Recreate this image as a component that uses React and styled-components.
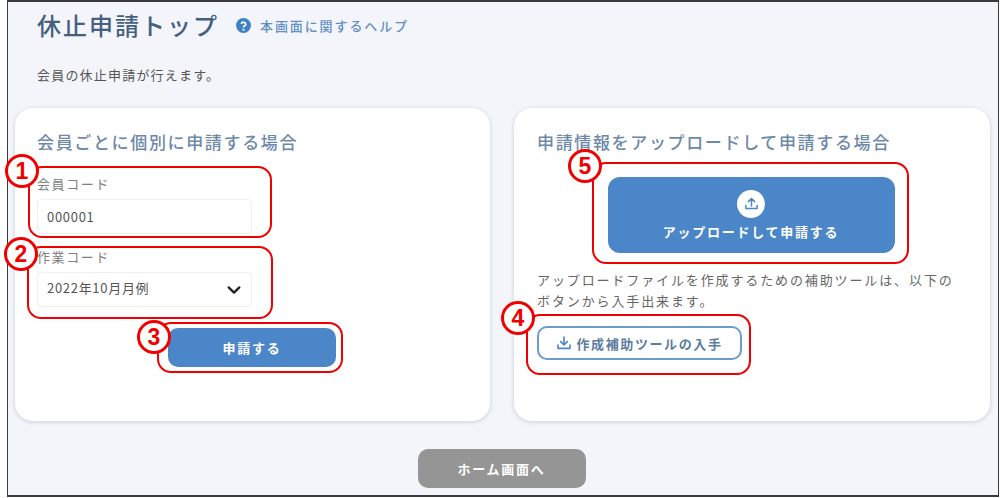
import styled, { createGlobalStyle } from "styled-components";

const GlobalStyle = createGlobalStyle`
  * {
    box-sizing: border-box;
  }
  body {
    margin: 0;
    background: #fff;
    font-family: "Noto Sans CJK JP", "Noto Sans", sans-serif;
  }
`;

const Page = styled.div`
  width: 1000px;
  height: 498px;
  padding: 0 1px 1px 7px;
  background: #fff;
`;

const Frame = styled.div`
  position: relative;
  width: 100%;
  height: 100%;
  padding: 0 7px;
  background: #f4f5fa;
  border: solid #3a3a3a;
  border-width: 2px 1px 2px 1px;
  display: flex;
  flex-direction: column;
`;

const Header = styled.div`
  display: flex;
  align-items: center;
  height: 46px;
  padding: 0 0 0 22px;
`;

const Title = styled.h1`
  margin: 0;
  font-size: 24px;
  line-height: 34px;
  font-weight: 500;
  letter-spacing: 2px;
  color: #44607f;
`;

const HelpLink = styled.a`
  display: flex;
  align-items: center;
  gap: 9px;
  margin-left: 17px;
  font-size: 13px;
  font-weight: 500;
  letter-spacing: 1.9px;
  color: #5f8fc4;
`;

const Description = styled.p`
  margin: 17px 0 0 22px;
  font-size: 13px;
  line-height: 20px;
  letter-spacing: 1.2px;
  color: #555;
`;

const Columns = styled.div`
  display: grid;
  grid-template-columns: 475px 476px;
  gap: 24px;
  margin-top: 23px;
`;

const Card = styled.section`
  height: 313px;
  padding: 21px ${(p) => p.$side}px;
  background: #fff;
  border-radius: 18px;
  box-shadow: 0 1px 4px rgba(90, 100, 130, 0.28);
`;

const CardTitle = styled.h2`
  margin: 0;
  font-size: 17px;
  line-height: 26px;
  font-weight: 500;
  letter-spacing: 1.65px;
  color: #6d88a8;
`;

const Field = styled.div`
  margin-top: ${(p) => p.$top}px;
  width: 215px;
`;

const Label = styled.div`
  font-size: 13px;
  line-height: 18px;
  letter-spacing: 1.6px;
  color: #808080;
`;

const Control = styled.div`
  display: flex;
  align-items: center;
  justify-content: space-between;
  height: 35px;
  margin-top: 6px;
  padding: 0 9px;
  background: #fff;
  border: 1px solid #f0f0f3;
  border-radius: 4px;
  font-size: 13px;
  letter-spacing: 0.7px;
  color: #555;
`;

const SelectValue = styled.span`
  margin-bottom: 4px;
`;

const SubmitRow = styled.div`
  display: flex;
  margin: 21px 0 0 131px;
`;

const SolidButton = styled.button`
  display: flex;
  flex-direction: column;
  align-items: center;
  justify-content: center;
  width: ${(p) => p.$w}px;
  height: ${(p) => p.$h}px;
  padding: 0;
  background: ${(p) => p.$bg || "#4a86c8"};
  border: none;
  border-radius: ${(p) => p.$radius || 10}px;
  color: #fff;
  font-family: inherit;
  font-size: 13px;
  font-weight: 700;
  letter-spacing: 1.75px;
`;

const UploadRow = styled.div`
  display: flex;
  justify-content: center;
  margin-top: 22px;
  padding-right: 2px;
`;

const UploadIcon = styled.span`
  display: flex;
  align-items: center;
  justify-content: center;
  width: 28px;
  height: 28px;
  margin-bottom: 4px;
  background: #fff;
  border-radius: 50%;
`;

const Note = styled.p`
  margin: 16px 0 0;
  font-size: 13px;
  line-height: 21px;
  letter-spacing: 1.88px;
  color: #666;
`;

const OutlineButton = styled.button`
  display: flex;
  align-items: center;
  justify-content: center;
  gap: 4px;
  width: 205px;
  height: 34px;
  margin-top: 15px;
  padding: 0;
  background: #fff;
  border: 2px solid #6f9ac9;
  border-radius: 10px;
  color: #5d7d9f;
  font-family: inherit;
  font-size: 13px;
  font-weight: 700;
  letter-spacing: 1.6px;
`;

const Footer = styled.div`
  display: flex;
  justify-content: center;
  margin-top: 28px;
  padding-right: 3px;
`;

const Marker = styled.div`
  position: absolute;
  left: ${(p) => p.$x - 8}px;
  top: ${(p) => p.$y - 2}px;
  width: ${(p) => p.$w}px;
  height: ${(p) => p.$h}px;
  border: 2px solid #f00000;
  border-radius: 14px;
  pointer-events: none;
`;

const Badge = styled.div`
  position: absolute;
  left: ${(p) => p.$x - 8 - 17}px;
  top: ${(p) => p.$y - 2 - 17}px;
  width: 34px;
  height: 34px;
  display: flex;
  align-items: center;
  justify-content: center;
  background: #fff;
  border: 3px solid #f00000;
  border-radius: 50%;
  color: #f00000;
  font-family: "Liberation Sans", sans-serif;
  font-size: 23px;
  font-weight: 700;
`;

const markers = [
  { x: 28, y: 166, w: 244, h: 72 },
  { x: 27, y: 246, w: 246, h: 73 },
  { x: 157, y: 322, w: 186, h: 51 },
  { x: 526, y: 314, w: 225, h: 61 },
  { x: 592, y: 162, w: 317, h: 102 },
];

const badges = [
  { n: 1, x: 22, y: 171 },
  { n: 2, x: 21, y: 254 },
  { n: 3, x: 154, y: 337 },
  { n: 4, x: 518, y: 318 },
  { n: 5, x: 585, y: 166 },
];

function HelpIcon() {
  return (
    <svg width="15" height="15" viewBox="0 0 24 24">
      <circle cx="12" cy="12" r="12" fill="#3f82c4" />
      <path
        d="M8.4 9.4a3.7 3.7 0 0 1 7.2 .6c0 2.5-3.6 2.7-3.6 5"
        fill="none"
        stroke="#fff"
        strokeWidth="2.8"
      />
      <circle cx="12" cy="18.8" r="1.7" fill="#fff" />
    </svg>
  );
}

function TrayArrow({ up, color, size }) {
  return (
    <svg
      width={size}
      height={size}
      viewBox="0 0 24 24"
      fill="none"
      stroke={color}
      strokeWidth="2.4"
      strokeLinecap="round"
      strokeLinejoin="round"
    >
      <path d="M3 15v5h18v-5" />
      {up ? (
        <path d="M12 16V4M7 9l5-5 5 5" />
      ) : (
        <path d="M12 3v12M7 10l5 5 5-5" />
      )}
    </svg>
  );
}

function Chevron() {
  return (
    <svg width="16" height="16" viewBox="0 0 24 24" fill="none" stroke="#222" strokeWidth="3.4" strokeLinecap="round" strokeLinejoin="round">
      <path d="M4 8l8 8 8-8" />
    </svg>
  );
}

export default function App() {
  return (
    <>
      <GlobalStyle />
      <Page>
        <Frame>
          <Header>
            <Title>休止申請トップ</Title>
            <HelpLink>
              <HelpIcon />
              本画面に関するヘルプ
            </HelpLink>
          </Header>
          <Description>会員の休止申請が行えます。</Description>
          <Columns>
            <Card $side={22}>
              <CardTitle>会員ごとに個別に申請する場合</CardTitle>
              <Field $top={20}>
                <Label>会員コード</Label>
                <Control>000001</Control>
              </Field>
              <Field $top={14}>
                <Label>作業コード</Label>
                <Control>
                  <SelectValue>2022年10月月例</SelectValue>
                  <Chevron />
                </Control>
              </Field>
              <SubmitRow>
                <SolidButton $w={168} $h={39}>申請する</SolidButton>
              </SubmitRow>
            </Card>
            <Card $side={23}>
              <CardTitle>申請情報をアップロードして申請する場合</CardTitle>
              <UploadRow>
                <SolidButton $w={287} $h={76} $radius={12}>
                  <UploadIcon>
                    <TrayArrow up color="#4a86c8" size={15} />
                  </UploadIcon>
                  アップロードして申請する
                </SolidButton>
              </UploadRow>
              <Note>
                アップロードファイルを作成するための補助ツールは、以下の
                <br />
                ボタンから入手出来ます。
              </Note>
              <OutlineButton>
                <TrayArrow color="#4a86c8" size={16} />
                作成補助ツールの入手
              </OutlineButton>
            </Card>
          </Columns>
          <Footer>
            <SolidButton $w={168} $h={39} $bg="#959595">ホーム画面へ</SolidButton>
          </Footer>
          {markers.map((m) => (
            <Marker key={m.x} $x={m.x} $y={m.y} $w={m.w} $h={m.h} />
          ))}
          {badges.map((b) => (
            <Badge key={b.n} $x={b.x} $y={b.y}>{b.n}</Badge>
          ))}
        </Frame>
      </Page>
    </>
  );
}
